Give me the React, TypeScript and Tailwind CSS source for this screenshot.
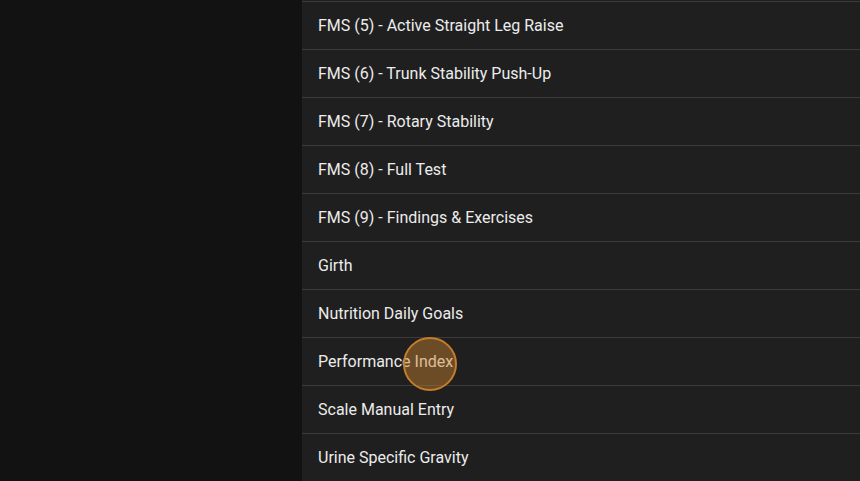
const items = [
  "FMS (5) - Active Straight Leg Raise",
  "FMS (6) - Trunk Stability Push-Up",
  "FMS (7) - Rotary Stability",
  "FMS (8) - Full Test",
  "FMS (9) - Findings & Exercises",
  "Girth",
  "Nutrition Daily Goals",
  "Performance Index",
  "Scale Manual Entry",
  "Urine Specific Gravity",
];

export default function App() {
  return (
    <div
      className="flex h-[481px] w-[860px] overflow-hidden bg-[#121212]"
      style={{ fontFamily: "Roboto, 'Noto Sans', sans-serif" }}
    >
      <div className="w-[302px] shrink-0 bg-[#121212]" />
      <div className="relative flex-1 bg-[#1f1f1f] pt-px">
        {items.map((label) => (
          <div
            key={label}
            className="flex h-[48px] items-center border-t border-[#3b3b3b] pl-4 pt-px text-[16px] text-[#ececec]"
          >
            {label}
          </div>
        ))}
        {/* tap indicator */}
        <div className="absolute left-[101px] top-[337px] h-[54px] w-[54px] rounded-full border-2 border-[#c47d2b] bg-[#c9822e]/45" />
      </div>
    </div>
  );
}
